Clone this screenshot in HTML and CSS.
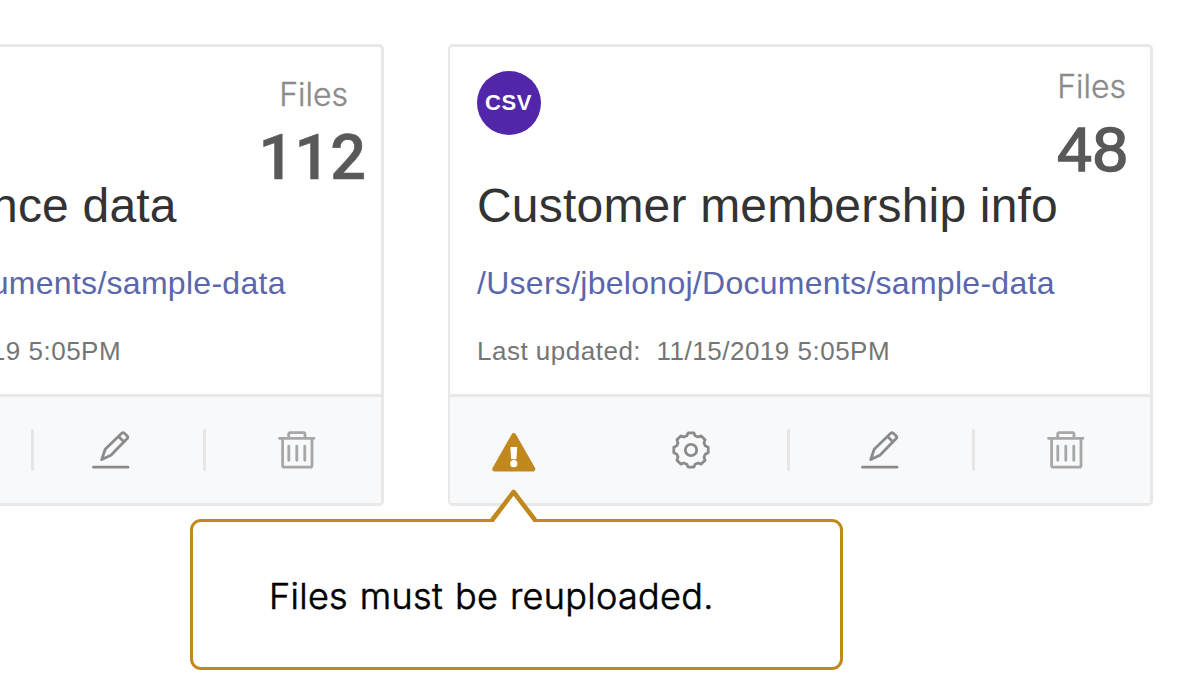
FILE: index.html
```
<!DOCTYPE html>
<html lang="en">
<head>
<meta charset="utf-8">
<title>Data sources</title>
<link rel="stylesheet" href="styles.css">
</head>
<body>
<svg width="0" height="0" class="defs">
  <symbol id="pencil" viewBox="0 0 38 38">
    <g fill="none" stroke="#8b8b8b" stroke-width="2.8" stroke-linejoin="round" stroke-linecap="round">
      <path d="M1.5 36.2H36"/>
      <path d="M9.7 28.6l3.5-10.4L30 2.1Q31.2 1.1 32.4 2.2L35.2 4.9Q36.4 6.2 35.2 7.5L18.9 24.2z"/>
      <path d="M26.7 5.8l5.2 5"/>
    </g>
  </symbol>
  <symbol id="trash" viewBox="0 0 38 38">
    <g fill="none" stroke="#a6a7a6" stroke-width="2.8" stroke-linejoin="round" stroke-linecap="round">
      <path d="M1.5 7.3H36M10.7 7V3.1Q10.7 1.6 12.2 1.6H25.5Q27 1.6 27 3.1V7"/>
      <path d="M4.6 7.5V34.5Q4.6 36.2 6.3 36.2H32.3Q34 36.2 34 34.5V7.5M10.8 15.2V29.3M18.8 15.2V29.3M26.8 15.2V29.3"/>
    </g>
  </symbol>
</svg>
<main class="page">
  <section class="card card-a">
    <div class="body">
      <header class="head">
        <span></span>
        <div class="stats"><div class="label">Files</div><div class="count">112</div></div>
      </header>
      <h2 class="title">Performance data</h2>
      <a class="path">/Users/jbelonoj/Documents/sample-data</a>
      <p class="meta"><span>Last updated:</span><span>11/15/2019 5:05PM</span></p>
    </div>
    <footer class="actions">
      <i class="sep"></i>
      <svg class="icon pencil"><use href="#pencil"/></svg>
      <i class="sep"></i>
      <svg class="icon trash"><use href="#trash"/></svg>
    </footer>
  </section>
  <section class="card card-b">
    <div class="body">
      <header class="head">
        <span class="badge">CSV</span>
        <div class="stats"><div class="label">Files</div><div class="count">48</div></div>
      </header>
      <h2 class="title">Customer membership info</h2>
      <a class="path">/Users/jbelonoj/Documents/sample-data</a>
      <p class="meta"><span>Last updated:</span><span>11/15/2019 5:05PM</span></p>
    </div>
    <footer class="actions">
      <svg class="warning" viewBox="0 0 44 40">
        <path d="M21.8 2.7L40.8 36.1H2.8z" fill="#c1881e" stroke="#c1881e" stroke-width="5" stroke-linejoin="round"/>
        <path d="M18.9 14H24.7Q25.3 14 25.2 14.6L24.5 25.6Q24.4 26.3 23.8 26.3H19.8Q19.2 26.3 19.1 25.6L18.4 14.6Q18.3 14 18.9 14z" fill="#fff"/>
        <circle cx="21.8" cy="30.7" r="3.6" fill="#fff"/>
      </svg>
      <svg class="icon gear" viewBox="-19 -19 38 38">
        <g fill="none" stroke="#8b8b8b" stroke-width="2.8" stroke-linejoin="round">
          <path d="M-2.8-17.2H2.8L4.2-14.2 7.1-13 10.2-14.1 14.1-10.2 13-7.1 14.2-4.2 17.2-2.8V2.8L14.2 4.2 13 7.1 14.1 10.2 10.2 14.1 7.1 13 4.2 14.2 2.8 17.2H-2.8L-4.2 14.2-7.1 13-10.2 14.1-14.1 10.2-13 7.1-14.2 4.2-17.2 2.8V-2.8L-14.2-4.2-13-7.1-14.1-10.2-10.2-14.1-7.1-13-4.2-14.2z"/>
          <circle r="5.7"/>
        </g>
      </svg>
      <i class="sep"></i>
      <svg class="icon pencil"><use href="#pencil"/></svg>
      <i class="sep"></i>
      <svg class="icon trash"><use href="#trash"/></svg>
    </footer>
  </section>
</main>
<div class="tooltip" role="tooltip">
  <svg class="pointer" viewBox="0 0 50 34"><path d="M5 34V30.500L24.600 4.500 44 30.500V34z" fill="#fff"/><path d="M3.200 32L24.600 4 46 32" fill="none" stroke="#c1881e" stroke-width="4.600" stroke-linejoin="round"/></svg>
  <span class="message">Files must be reuploaded.</span>
</div>
</body>
</html>
```
FILE: styles.css
```
* { box-sizing: border-box; }
body {
  margin: 0;
  width: 1196px;
  height: 698px;
  overflow: hidden;
  position: relative;
  background: #fff;
  font-family: "Liberation Sans", Arial, sans-serif;
}
.defs { position: absolute; }
.page { display: flex; gap: 64px; padding-top: 44px; margin-left: -321px; }
.card {
  flex: none;
  width: 705px;
  height: 462px;
  border: 3px solid #e8e8e8;
  border-left-width: 2px;
  border-radius: 5px;
  display: flex;
  flex-direction: column;
  overflow: hidden;
}
.body { height: 347px; padding: 0 24px 0 27px; white-space: nowrap; }
.head { display: flex; justify-content: space-between; align-items: flex-start; height: 135px; padding-top: 20px; }
.card-a .head { padding-top: 28px; margin-right: -6px; }
.stats { text-align: right; }
.label { font: 300 32px/40px Inter, sans-serif; color: #8b8b8b; -webkit-text-stroke: 0.4px #8b8b8b; }
.card-a .label { padding-right: 15px; }
.count { margin-top: 11px; font-size: 63px; line-height: 63px; color: #595959; -webkit-text-stroke: 1.6px #595959; letter-spacing: 0.3px; margin-right: -2px; }
.card-a .count { font-family: Roboto, "Liberation Sans", sans-serif; font-weight: 500; -webkit-text-stroke: 0.6px #595959; margin-right: -3px; letter-spacing: 0; }
.badge {
  width: 64px;
  height: 64px;
  margin: 3.5px 0 0 -0.5px;
  border-radius: 50%;
  background: #5126a9;
  color: #fff;
  font-size: 22px;
  font-weight: 700;
  letter-spacing: 0.6px;
  line-height: 64px;
  text-align: center;
}
.title { margin: 0; font-size: 48px; font-weight: 400; line-height: 48px; letter-spacing: 0.2px; color: #333; }
.path { display: block; margin-top: 33px; font-size: 32px; line-height: 40px; letter-spacing: 0.28px; color: #5a66ad; }
.meta { display: flex; gap: 15.5px; margin: 32px 0 0; font-size: 26px; line-height: 32px; letter-spacing: 0.5px; color: #757575; }
.card-a .title, .card-a .path, .card-a .meta { width: max-content; }
.card-a .title { margin-left: 84px; }
.actions {
  flex: 1;
  display: flex;
  align-items: center;
  justify-content: flex-end;
  padding-right: 65px;
  border-top: 3px solid #e8e8e8;
  background: #f8f9fb;
}
.icon { width: 38px; height: 38px; flex: none; }
.sep { width: 3px; height: 42px; border-radius: 1px; background: #e6e6e7; margin: 0 72px 0 73px; }
.warning { width: 44px; height: 40px; margin: 6px 136px 0 0; }
.card-b .gear + .sep { margin: 0 71px 0 77px; }
.card-a .sep:first-child { margin-right: 58px; }
.tooltip {
  position: absolute;
  left: 190px;
  top: 519px;
  width: 653px;
  height: 151px;
  border: 3px solid #c1881e;
  border-radius: 11px;
  background: #fff;
  display: flex;
  align-items: center;
  padding: 2px 0 0 76px;
}
.pointer { position: absolute; left: 296px; top: -34px; width: 50px; height: 34px; }
.message { font: 300 36px/46px Inter, sans-serif; -webkit-text-stroke: 0.6px #000; letter-spacing: 0.3px; word-spacing: 1.5px; color: #000; white-space: nowrap; }
```
